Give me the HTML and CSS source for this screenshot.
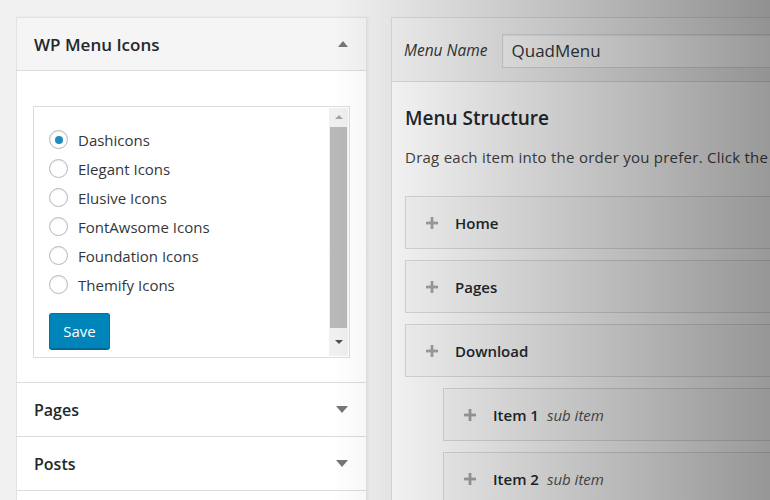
FILE: index.html
```html
<!DOCTYPE html>
<html>
<head>
<meta charset="utf-8">
<link rel="stylesheet" href="styles.css">
</head>
<body>
<div class="page">
  <aside class="side">
    <section class="acc acc-open">
      <header class="acc-head acc-head-open">
        <h3 class="acc-title">WP Menu Icons</h3>
        <span class="tri tri-up"></span>
      </header>
      <div class="acc-body">
        <div class="listbox">
          <div class="list-content">
            <label class="opt"><span class="radio radio-on"></span><span class="opt-text">Dashicons</span></label>
            <label class="opt"><span class="radio"></span><span class="opt-text">Elegant Icons</span></label>
            <label class="opt"><span class="radio"></span><span class="opt-text">Elusive Icons</span></label>
            <label class="opt"><span class="radio"></span><span class="opt-text">FontAwsome Icons</span></label>
            <label class="opt"><span class="radio"></span><span class="opt-text">Foundation Icons</span></label>
            <label class="opt"><span class="radio"></span><span class="opt-text">Themify Icons</span></label>
            <button class="btn-save">Save</button>
          </div>
          <div class="scrollbar">
            <span class="sb-arrow sb-up"></span>
            <span class="sb-thumb"></span>
            <span class="sb-arrow sb-down"></span>
          </div>
        </div>
      </div>
    </section>
    <section class="acc">
      <header class="acc-head">
        <h3 class="acc-title">Pages</h3>
        <span class="tri tri-down"></span>
      </header>
    </section>
    <section class="acc">
      <header class="acc-head">
        <h3 class="acc-title">Posts</h3>
        <span class="tri tri-down"></span>
      </header>
    </section>
    <section class="acc acc-empty"></section>
  </aside>

  <main class="menu-panel">
    <div class="menu-head">
      <span class="menu-name-label">Menu Name</span>
      <div class="menu-name-input">QuadMenu</div>
    </div>
    <div class="menu-body">
      <h2 class="menu-title">Menu Structure</h2>
      <p class="menu-desc">Drag each item into the order you prefer. Click the</p>
      <ul class="items">
        <li class="item"><svg class="plus" viewBox="0 0 12 12"><rect x="4.6" y="0" width="2.8" height="12"/><rect x="0" y="4.6" width="12" height="2.8"/></svg><span class="item-title">Home</span></li>
        <li class="item"><svg class="plus" viewBox="0 0 12 12"><rect x="4.6" y="0" width="2.8" height="12"/><rect x="0" y="4.6" width="12" height="2.8"/></svg><span class="item-title">Pages</span></li>
        <li class="item"><svg class="plus" viewBox="0 0 12 12"><rect x="4.6" y="0" width="2.8" height="12"/><rect x="0" y="4.6" width="12" height="2.8"/></svg><span class="item-title">Download</span></li>
        <li class="item item-sub"><svg class="plus" viewBox="0 0 12 12"><rect x="4.6" y="0" width="2.8" height="12"/><rect x="0" y="4.6" width="12" height="2.8"/></svg><span class="item-title">Item 1</span><span class="item-note">sub item</span></li>
        <li class="item item-sub"><svg class="plus" viewBox="0 0 12 12"><rect x="4.6" y="0" width="2.8" height="12"/><rect x="0" y="4.6" width="12" height="2.8"/></svg><span class="item-title">Item 2</span><span class="item-note">sub item</span></li>
      </ul>
    </div>
  </main>
</div>
<div class="shade"></div>
</body>
</html>
```

FILE: styles.css
```css
* { box-sizing: border-box; }
html, body { margin: 0; padding: 0; }
body {
  width: 770px;
  height: 500px;
  overflow: hidden;
  background: #f1f1f1;
  font-family: "Open Sans", "Noto Sans", sans-serif;
  color: #32373c;
  position: relative;
}
.page {
  display: flex;
  align-items: flex-start;
  gap: 24px;
  padding: 17px 0 0 16px;
}

/* left accordion */
.side {
  width: 351px;
  flex: none;
  background: #fff;
  border: 1px solid #e2e2e2;
  border-bottom: none;
  box-shadow: 1px 0 3px rgba(0,0,0,.06);
}
.acc { border-top: 1px solid #dcdcdc; }
.acc-open { border-top: none; }
.acc-empty { height: 40px; }
.acc-head {
  height: 53px;
  display: flex;
  align-items: center;
  justify-content: space-between;
  padding: 0 18px 0 17px;
  background: #fff;
}
.acc-head-open {
  background: #f5f5f5;
  border-bottom: 1px solid #dcdcdc;
}
.acc-title {
  margin: 0;
  font-size: 16px;
  font-weight: 600;
  color: #23282d;
}
.acc-head-open .acc-title { font-size: 17px; }
.tri { width: 0; height: 0; border-left: 5px solid transparent; border-right: 5px solid transparent; }
.tri-up { border-bottom: 6px solid #72777c; }
.tri-down { border-top: 7px solid #72777c; border-left-width: 6px; border-right-width: 6px; }
.acc-body { padding: 35px 16px 24px 16px; }
.listbox {
  display: flex;
  height: 252px;
  border: 1px solid #dcdcdc;
  background: #fff;
}
.list-content {
  flex: 1;
  padding: 18px 0 0 15px;
  display: flex;
  flex-direction: column;
  align-items: flex-start;
}
.opt {
  height: 29px;
  display: flex;
  align-items: center;
  gap: 10px;
  font-size: 15px;
  color: #32373c;
}
.radio {
  width: 19px;
  height: 19px;
  border-radius: 50%;
  border: 1px solid #b4b9be;
  background: #fff;
  box-shadow: inset 0 1px 2px rgba(0,0,0,.08);
  display: flex;
  align-items: center;
  justify-content: center;
}
.radio-on::after {
  content: "";
  width: 8px;
  height: 8px;
  border-radius: 50%;
  background: #1e8cbe;
}
.btn-save {
  margin-top: 14px;
  width: 61px;
  height: 36px;
  border: 1px solid #0073aa;
  border-bottom-color: #006799;
  border-radius: 3px;
  background: #0085ba;
  color: #fff;
  font-family: inherit;
  font-size: 15px;
  padding: 0;
  box-shadow: 0 1px 0 #006799;
}
.scrollbar {
  width: 19px;
  margin: 1px 1px 1px 0;
  background: #f0f0f0;
  display: flex;
  flex-direction: column;
  align-items: center;
}
.sb-arrow { width: 0; height: 0; border-left: 4px solid transparent; border-right: 4px solid transparent; }
.sb-up { border-bottom: 4px solid #a3a3a3; margin: 7px 0 8px; }
.sb-down { border-top: 4px solid #505050; margin: 12px 0 0; }
.sb-thumb { width: 17px; height: 201px; background: #b9b9b9; }

/* right menu panel */
.menu-panel {
  width: 420px;
  flex: none;
  background: #fff;
  border: 1px solid #dcdcdc;
  border-right: none;
}
.menu-head {
  height: 64px;
  display: flex;
  align-items: center;
  gap: 15px;
  padding: 0 0 0 12px;
  background: #f5f5f5;
  border-bottom: 1px solid #dcdcdc;
}
.menu-name-label {
  font-style: italic;
  font-size: 15.5px;
  color: #32373c;
}
.menu-name-input {
  flex: 1;
  height: 34px;
  margin-top: 2px;
  display: flex;
  align-items: center;
  padding-left: 8px;
  border: 1px solid #ddd;
  border-right: none;
  background: #fff;
  font-size: 17px;
  color: #32373c;
  box-shadow: inset 0 1px 2px rgba(0,0,0,.07);
}
.menu-body { padding: 20px 0 0 13px; }
.menu-title {
  margin: 0;
  font-size: 19px;
  font-weight: 600;
  line-height: 32px;
  color: #23282d;
}
.menu-desc {
  margin: 11px 0 0;
  font-size: 15px;
  letter-spacing: 0.25px;
  line-height: 24px;
  white-space: nowrap;
  color: #444;
}
.items {
  list-style: none;
  margin: 27px 0 0;
  padding: 0;
  display: flex;
  flex-direction: column;
  gap: 11px;
}
.item {
  height: 53px;
  display: flex;
  align-items: center;
  padding-left: 20px;
  border: 1px solid #dcdcdc;
  border-right: none;
  background: #fafafa;
  font-size: 15px;
}
.item-sub { margin-left: 38px; }
.plus { width: 12px; height: 12px; fill: #a0a5aa; margin-right: 17px; }
.item-title { font-weight: 600; color: #23282d; }
.item-note { margin-left: 8px; font-style: italic; color: #555; }

.shade {
  position: absolute;
  inset: 0;
  pointer-events: none;
  background: linear-gradient(90deg, rgba(0,0,0,0) 43%, rgba(0,0,0,.2) 72%, rgba(0,0,0,.4) 100%);
}
```
